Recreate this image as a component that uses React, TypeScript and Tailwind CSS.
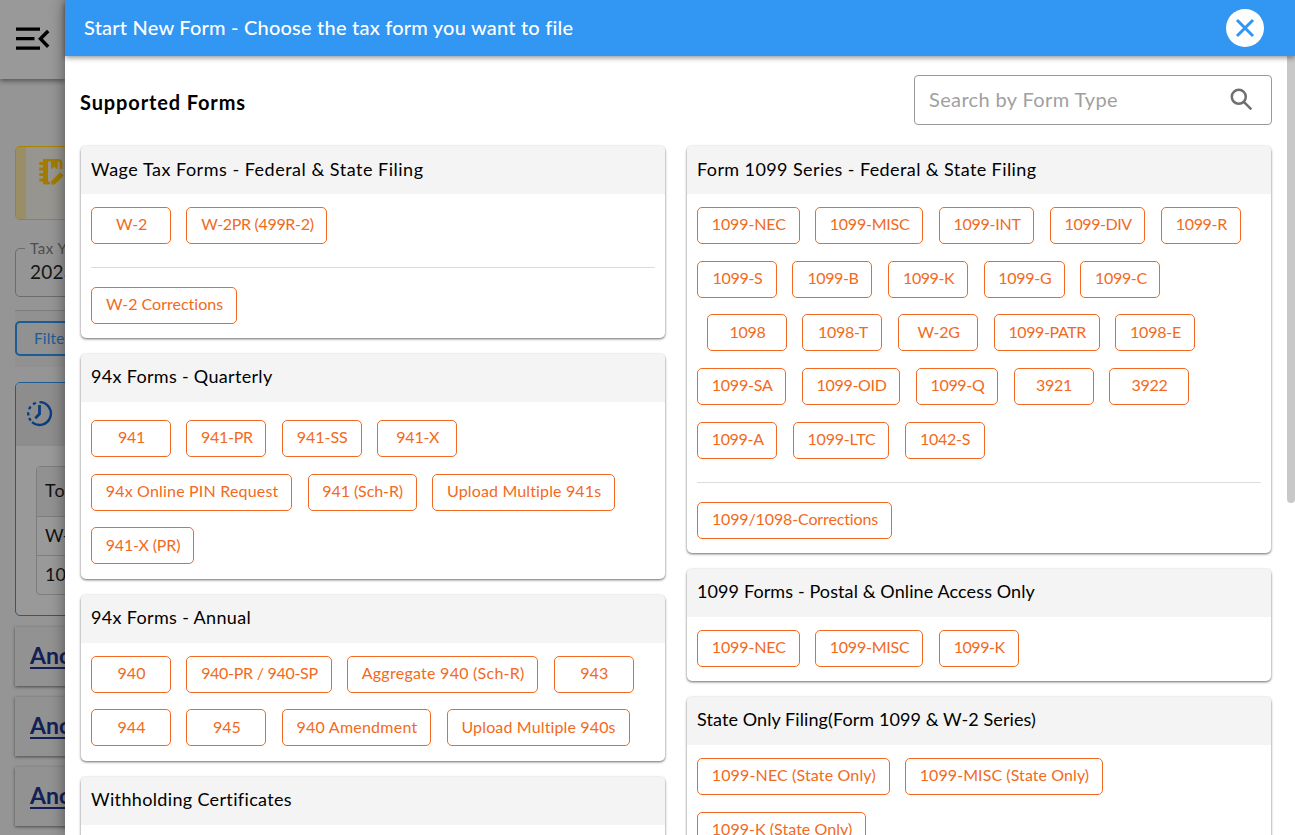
import { useLayoutEffect, useRef, useState } from "react";

function Fit({ text, width, className = "" }: { text: string; width?: number; className?: string }) {
  const ref = useRef<HTMLSpanElement>(null);
  const [spacing, setSpacing] = useState(0.2);
  useLayoutEffect(() => {
    const el = ref.current;
    if (!el || !width) return;
    el.style.letterSpacing = "0px";
    const natural = el.getBoundingClientRect().width;
    setSpacing((width - natural) / text.length);
  }, [text, width]);
  return (
    <span ref={ref} className={"inline-block whitespace-pre " + className} style={{ letterSpacing: spacing + "px" }}>
      {text}
    </span>
  );
}

type Item = [label: string, width: number, textWidth?: number];

function Chip({ item }: { item: Item }) {
  const [label, width, textWidth] = item;
  return (
    <button
      className="flex h-[37px] shrink-0 items-center justify-center rounded-[5px] border border-[#f26a21] bg-white pb-[2.4px] pl-[1px] text-[16px] leading-5 text-[#f26a21]"
      style={{ width }}
    >
      <Fit text={label} width={textWidth ?? width - 28.5} />
    </button>
  );
}

function Rows({ rows }: { rows: Item[][] }) {
  return (
    <div className="flex flex-col gap-[16.7px]">
      {rows.map((row, i) => (
        <div key={i} className={row[0][0] === "1098" ? "flex gap-[15.4px] pl-[10px]" : "flex gap-[15.4px]"}>
          {row.map((item) => (
            <Chip key={item[0]} item={item} />
          ))}
        </div>
      ))}
    </div>
  );
}

function Card({ title, titleWidth, className, rows, extra, bodyClass }: {
  title: string; titleWidth: number; className: string; rows: Item[][]; extra?: Item[][]; bodyClass: string;
}) {
  return (
    <section className={"shrink-0 overflow-hidden rounded-[5px] bg-white shadow-[0_1px_3px_rgba(0,0,0,0.4),0_1px_2px_rgba(0,0,0,0.25)] " + className}>
      <h2 className="flex h-12 items-center bg-[#f4f4f4] px-[10px] pb-[3px] text-[18px] leading-6 text-black">
        <Fit text={title} width={titleWidth} />
      </h2>
      <div className={"px-[10px] " + bodyClass}>
        <Rows rows={rows} />
        {extra && (
          <div className="mt-[23px] border-t border-[#dcdcdc] pt-[19px]">
            <Rows rows={extra} />
          </div>
        )}
      </div>
    </section>
  );
}

const W2: Item[][] = [[["W-2", 80, 31], ["W-2PR (499R-2)", 141]]];
const W2C: Item[][] = [[["W-2 Corrections", 146]]];
const QUARTERLY: Item[][] = [
  [["941", 80, 27], ["941-PR", 80, 52], ["941-SS", 80, 51], ["941-X", 80, 43]],
  [["94x Online PIN Request", 201.2], ["941 (Sch-R)", 109.2], ["Upload Multiple 941s", 183]],
  [["941-X (PR)", 103]],
];
const ANNUAL: Item[][] = [
  [["940", 80, 28], ["940-PR / 940-SP", 145], ["Aggregate 940 (Sch-R)", 191.4], ["943", 80, 28]],
  [["944", 80, 28], ["945", 80, 28], ["940 Amendment", 149.4], ["Upload Multiple 940s", 183]],
];
ANNUAL[0][1][1] = 145.2;
const S1099: Item[][] = [
  [["1099-NEC", 102.6], ["1099-MISC", 108.3], ["1099-INT", 95.8], ["1099-DIV", 95.6], ["1099-R", 80, 51]],
  [["1099-S", 80, 50], ["1099-B", 80.1, 51], ["1099-K", 80.4, 51], ["1099-G", 81.4, 53], ["1099-C", 80, 52]],
  [["1098", 80, 36], ["1098-T", 80, 50], ["W-2G", 80.5, 42], ["1099-PATR", 106], ["1098-E", 80, 51]],
  [["1099-SA", 89.4], ["1099-OID", 98.6], ["1099-Q", 82.4], ["3921", 80, 36], ["3922", 80, 36]],
  [["1099-A", 80.4, 52], ["1099-LTC", 96.4], ["1042-S", 80, 50]],
];
const S1099C: Item[][] = [[["1099/1098-Corrections", 195]]];
const POSTAL: Item[][] = [[["1099-NEC", 102.6], ["1099-MISC", 108.3], ["1099-K", 80, 51]]];
const STATE: Item[][] = [
  [["1099-NEC (State Only)", 192.6], ["1099-MISC (State Only)", 198]],
  [["1099-K (State Only)", 169]],
];

function Background() {
  return (
    <aside className="flex h-full w-[65px] shrink-0 flex-col overflow-hidden bg-[#959595]">
      <div className="relative h-[79px] shrink-0 bg-[#999] pt-[27px] pl-[16px] shadow-[0_2px_5px_rgba(0,0,0,0.45)]">
        <svg width="34" height="24" viewBox="0 0 34 24" fill="none" stroke="#000" strokeWidth="3.2">
          <path d="M0 2.2H24M0 11.6H18.5M0 21.2H24" />
          <path d="M32.2 4L24.4 11.8L32.2 19.8" strokeWidth="3.4" />
        </svg>
      </div>
      <div className="mt-[67px] ml-[15px] flex h-[74px] w-[120px] shrink-0 rounded-[5px] border border-[#a98400] bg-[#979590]">
        <div className="w-[10px] rounded-l-[4px] bg-[#998e66]" />
        <svg className="mt-[10px] ml-[12px]" width="30" height="30" viewBox="0 0 30 30" fill="none" stroke="#a17c00">
          <path d="M7.5 3.2H20.5Q23 3.2 23 5.7V12M7.5 26H12" strokeWidth="2.6" />
          <path d="M7.5 1.9V27.3" strokeWidth="5" />
          <path d="M13 3H19.5V12.5L16.2 9.7L13 12.5Z" fill="#a17c00" stroke="none" />
          <path d="M1.3 6.5H5M1.3 12H5M1.3 17.5H5M1.3 23H5" strokeWidth="3" />
          <path d="M13.2 24.2L22.2 15.2L25.6 18.6L16.6 27.6H13.2Z" fill="#a17c00" stroke="none" />
        </svg>
      </div>
      <fieldset className="mt-[18px] ml-[15px] h-[59px] w-[120px] shrink-0 rounded-[5px] border border-[#6c6c6c] px-[14px]">
        <legend className="-ml-[5px] h-[20px] px-[5px] text-[15px] leading-5 text-[#4d4d4d]"><Fit text="Tax Year" width={58} /></legend>
        <div className="text-[19px] leading-7 text-[#161616]"><Fit text="2023" width={45} /></div>
      </fieldset>
      <div className="mt-[13px] ml-[15px] h-[57px] shrink-0 border-t border-[#7d7d7d] bg-[#919191] pt-[10px]">
        <div className="h-[35px] w-[120px] rounded-[5px] border-2 border-[#1e5c95] pl-[17px] text-[15.5px] leading-[30px] text-[#1d5c95]"><Fit text="Filters" width={43} /></div>
      </div>
      <div className="mt-[15px] ml-[15px] h-[234px] w-[120px] shrink-0 overflow-hidden rounded-[5px] border border-[#1e5c95] bg-[#999]">
        <div className="h-[63px] bg-[#8d8d8d] pt-[17px] pl-[9.5px]">
          <svg width="27" height="27" viewBox="0 0 27 27" fill="none" stroke="#083d80" strokeWidth="2.4">
            <path d="M13.5 2.1A11.4 11.4 0 1 1 6 22.1" />
            <path d="M9.8 2.8L7 4.2M4.5 6.5L3 9.3M2.1 12.2L2.3 15.5M3.1 18L4.7 20.7" />
            <path d="M13.5 5V14L9.3 18.2" strokeWidth="2.8" />
          </svg>
        </div>
        <div className="mt-[20px] ml-[20px] w-[100px] rounded-[4px] border border-[#7d7d7d] text-[18px] text-[#111]">
          <div className="h-[49px] bg-[#919191] pl-[8px] leading-[47px]"><Fit text="Total" width={43} /></div>
          <div className="h-[39px] border-t border-[#7d7d7d] pl-[8px] leading-[36px]"><Fit text="W-2" width={34} /></div>
          <div className="h-[39px] border-t border-[#7d7d7d] pl-[8px] leading-[36px]"><Fit text="1099" width={42} /></div>
        </div>
      </div>
      <div className="mt-[11px] ml-[15px] flex shrink-0 flex-col gap-[11px]">
        {[0, 1, 2].map((n) => (
          <div key={n} className="h-[59px] w-[120px] bg-[#929292] pt-[14px] pl-[15px] text-[23px] leading-7 font-bold text-[#122057] shadow-[0_1px_3px_rgba(0,0,0,0.5)]">
            <span className="underline decoration-2 underline-offset-[3px]">Another</span>
          </div>
        ))}
      </div>
    </aside>
  );
}

export default function App() {
  return (
    <div className="flex h-[835px] w-[1295px] overflow-hidden bg-white font-['Lato','Open_Sans',sans-serif]">
      <Background />
      <main className="relative z-10 flex min-w-0 flex-1 flex-col bg-white shadow-[0_0_14px_rgba(0,0,0,0.45)]">
        <header className="relative z-10 flex h-14 shrink-0 items-center justify-between bg-[#3296f3] pr-[31px] pl-[19px] text-[20px] font-medium text-white shadow-[0_2px_5px_rgba(0,0,0,0.4)]">
          <Fit className="pb-[2px]" text="Start New Form - Choose the tax form you want to file" width={489} />
          <button className="flex size-[38px] items-center justify-center rounded-full bg-white">
            <svg width="20" height="20" viewBox="0 0 20 20" fill="none" stroke="#3296f3" strokeWidth="3">
              <path d="M2 2L18 18M18 2L2 18" />
            </svg>
          </button>
        </header>
        <div className="flex min-h-0 flex-1">
          <div className="flex w-[1222px] shrink-0 flex-col pl-[15px]">
            <div className="flex h-[90px] shrink-0 items-start justify-between pt-[19px] pr-[15px]">
              <h1 className="pt-[13px] text-[20px] leading-7 font-bold text-black"><Fit text="Supported Forms" width={166} /></h1>
              <div className="flex h-[50px] w-[358px] items-center justify-between rounded-[4px] border border-[#999] pr-[18px] pb-[2px] pl-[14px] text-[20px] text-[#a0a0a0]">
                <Fit text="Search by Form Type" width={189} />
                <svg width="23" height="23" viewBox="0 0 23 23" fill="none" stroke="#6f6f6f" strokeWidth="2.5">
                  <circle cx="8.8" cy="8.8" r="7" />
                  <path d="M13.8 13.8L21.3 21.3" />
                </svg>
              </div>
            </div>
            <div className="flex min-h-0 flex-1 items-start gap-[21.6px] pl-px">
              <div className="flex w-[584.4px] shrink-0 flex-col gap-[16px]">
                <Card className="h-[191.8px]" bodyClass="pt-[13px]" title="Wage Tax Forms - Federal & State Filing" titleWidth={332.5} rows={W2} extra={W2C} />
                <Card className="h-[224.8px]" bodyClass="pt-[18.2px]" title="94x Forms - Quarterly" titleWidth={181.5} rows={QUARTERLY} />
                <Card className="h-[166px]" bodyClass="pt-[13.1px]" title="94x Forms - Annual" titleWidth={160} rows={ANNUAL} />
                <Card className="h-[200px]" bodyClass="pt-[13px]" title="Withholding Certificates" titleWidth={201} rows={[]} />
              </div>
              <div className="flex w-[584.4px] shrink-0 flex-col gap-[16px]">
                <Card className="h-[406.7px]" bodyClass="pt-[13px]" title="Form 1099 Series - Federal & State Filing" titleWidth={339.5} rows={S1099} extra={S1099C} />
                <Card className="h-[112px]" bodyClass="pt-[13px]" title="1099 Forms - Postal & Online Access Only" titleWidth={338} rows={POSTAL} />
                <Card className="h-[200px]" bodyClass="pt-[13.4px]" title="State Only Filing(Form 1099 & W-2 Series)" titleWidth={339} rows={STATE} />
              </div>
            </div>
          </div>
          <div className="w-2 shrink-0">
            <div className="h-[447px] w-2 rounded-b-[4px] bg-[#c8c8c8]" />
          </div>
        </div>
      </main>
    </div>
  );
}
